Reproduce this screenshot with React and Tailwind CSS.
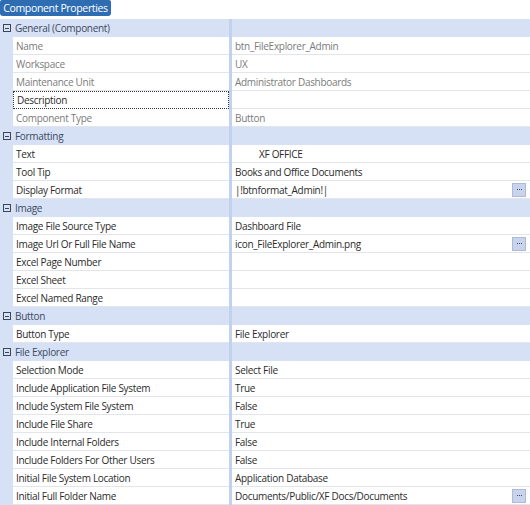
import React from 'react';

const sections = [
  {
    title: 'General (Component)',
    rows: [
      { name: 'Name', value: 'btn_FileExplorer_Admin', muted: true },
      { name: 'Workspace', value: 'UX', muted: true },
      { name: 'Maintenance Unit', value: 'Administrator Dashboards', muted: true },
      { name: 'Description', value: '', focused: true },
      { name: 'Component Type', value: 'Button', muted: true },
    ],
  },
  {
    title: 'Formatting',
    rows: [
      { name: 'Text', value: 'XF OFFICE', indent: true },
      { name: 'Tool Tip', value: 'Books and Office Documents' },
      { name: 'Display Format', value: '|!btnformat_Admin!|', more: true },
    ],
  },
  {
    title: 'Image',
    rows: [
      { name: 'Image File Source Type', value: 'Dashboard File' },
      { name: 'Image Url Or Full File Name', value: 'icon_FileExplorer_Admin.png', more: true },
      { name: 'Excel Page Number', value: '' },
      { name: 'Excel Sheet', value: '' },
      { name: 'Excel Named Range', value: '' },
    ],
  },
  {
    title: 'Button',
    rows: [{ name: 'Button Type', value: 'File Explorer' }],
  },
  {
    title: 'File Explorer',
    rows: [
      { name: 'Selection Mode', value: 'Select File' },
      { name: 'Include Application File System', value: 'True' },
      { name: 'Include System File System', value: 'False' },
      { name: 'Include File Share', value: 'True' },
      { name: 'Include Internal Folders', value: 'False' },
      { name: 'Include Folders For Other Users', value: 'False' },
      { name: 'Initial File System Location', value: 'Application Database' },
      { name: 'Initial Full Folder Name', value: 'Documents/Public/XF Docs/Documents', more: true },
    ],
  },
];

function CollapseBox() {
  return (
    <div className="w-[8px] h-[8px] border border-[#3b4656] flex items-center justify-center">
      <div className="w-[4px] h-[1px] bg-[#3b4656]" />
    </div>
  );
}

function MoreButton() {
  return (
    <div className="w-[14px] h-[14px] mr-[4px] bg-[#c9d4ec] border border-[#aebbd8] flex items-center justify-center gap-[1px]">
      <span className="w-[1px] h-[1px] bg-[#44506a]" />
      <span className="w-[1px] h-[1px] bg-[#44506a]" />
      <span className="w-[1px] h-[1px] bg-[#44506a]" />
    </div>
  );
}

function SectionHeader({ title }) {
  return (
    <div className="flex h-[18px] bg-[#d6e1f5]">
      <div className="w-[13px] flex items-center justify-center pl-[1px]">
        <CollapseBox />
      </div>
      <div className="w-[216px] flex items-center pl-[2px] text-[#3c4a5e]">{title}</div>
      <div className="w-[3px] bg-[#c2d2ee]" />
      <div className="flex-1" />
    </div>
  );
}

function PropertyRow({ row }) {
  const textColor = row.muted ? 'text-[#7b7b7b]' : 'text-[#2b2b2b]';
  return (
    <div className="flex h-[18px]">
      <div className="w-[13px] bg-[#d6e1f5]" />
      <div
        className={`w-[216px] flex items-center pl-[3px] border-b ${
          row.focused ? 'border border-dotted border-[#333]' : 'border-[#e2e5ea]'
        } ${textColor} ${row.focused ? 'text-[#2b2b2b]' : ''}`}
      >
        {row.name}
      </div>
      <div className="w-[3px] bg-[#c2d2ee]" />
      <div className={`flex-1 flex items-center justify-between border-b border-[#e2e5ea] ${textColor}`}>
        <span className={row.indent ? 'pl-[27px]' : 'pl-[3px]'}>{row.value}</span>
        {row.more && <MoreButton />}
      </div>
    </div>
  );
}

export default function App() {
  return (
    <div
      className="w-[530px] h-[505px] bg-white overflow-hidden text-[10px] tracking-[-0.3px] leading-none"
      style={{ fontFamily: '"Open Sans", "Noto Sans", sans-serif' }}
    >
      <div className="h-[19px]">
        <div className="inline-flex items-center h-[16px] w-[111px] justify-center bg-[#2f6db3] text-white text-[10.5px] tracking-[-0.35px] rounded-b-[3px] rounded-t-[2px]">
          Component Properties
        </div>
      </div>
      {sections.map((s) => (
        <div key={s.title}>
          <SectionHeader title={s.title} />
          {s.rows.map((r) => (
            <PropertyRow key={r.name} row={r} />
          ))}
        </div>
      ))}
    </div>
  );
}
